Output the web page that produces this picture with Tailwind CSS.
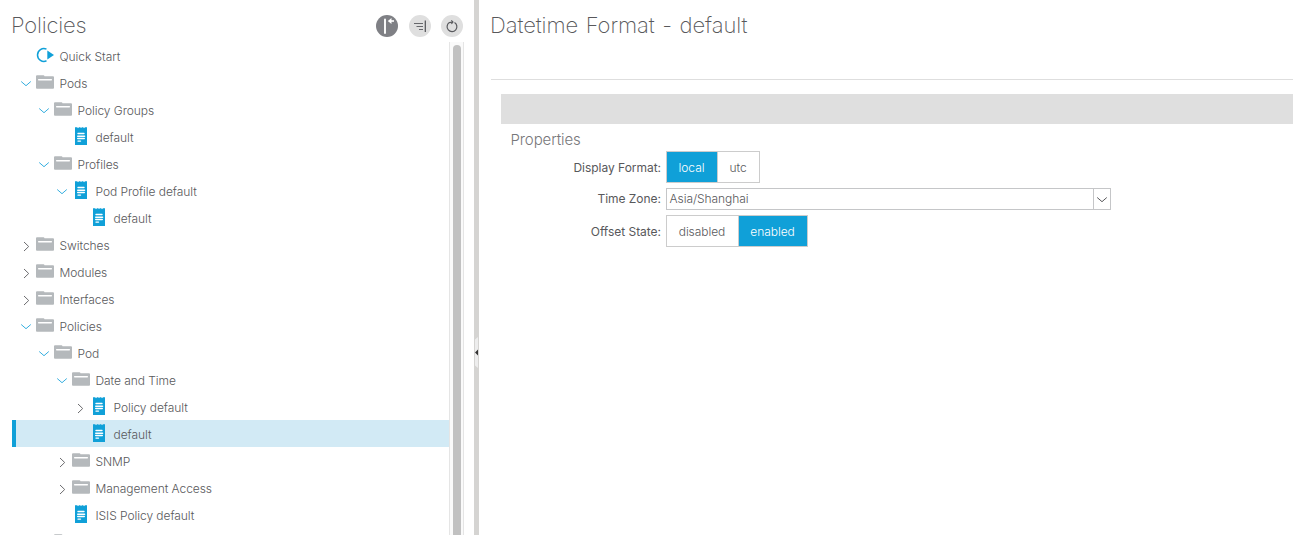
<!DOCTYPE html>
<html lang="en">
<head>
<meta charset="utf-8">
<title>Policies</title>
<script src="https://cdn.jsdelivr.net/npm/@tailwindcss/browser@4"></script>
</head>
<body class="h-[535px] w-[1293px] overflow-hidden bg-white font-['Inter',sans-serif] text-[12px] text-[#58585b]">
<svg class="hidden">
  <symbol id="folder" viewBox="0 0 18 14"><path d="M0 1.2Q0 .2 1 .2H7.500Q8.300 .3 8.500 1.300H17Q18 1.400 18 2.300V13Q18 13.700 17 13.700H1Q0 13.700 0 13Z" fill="#b5b9bc"/><path d="M2.700 4.700H15.300" stroke="#fff" stroke-width="1.500" stroke-linecap="round"/></symbol>
  <symbol id="doc" viewBox="0 0 12 18"><path d="M0 .3H2.200L3 1.300 4 .3H5.200L6 1 7 .3H8.200L9 1.300 10 .3H12V18H0Z" fill="#10a0d8"/><path d="M3 6.500H9M2.700 9.200H9.600M2.700 11.500H9.300M3 14.100H5.500" stroke="#fff" stroke-width="1.400" stroke-linecap="round"/></symbol>
  <symbol id="down" viewBox="0 0 16 16"><path d="M3.200 6.500 8 10.700 12.800 6.500" fill="none" stroke="currentColor" stroke-width="1"/></symbol>
  <symbol id="right" viewBox="0 0 16 16"><path d="M6 4 10.700 8.500 6 13" fill="none" stroke="#6c6c6f" stroke-width="1"/></symbol>
</svg>
<div class="flex h-full">
  <aside class="flex h-full w-[474px] shrink-0 flex-col">
    <header class="flex h-[42px] shrink-0 items-start justify-between pr-[11px] pl-[11px]">
      <h1 class="pt-[9px] text-[22px] leading-[32px] font-extralight tracking-[-0.2px] whitespace-nowrap">Policies</h1>
      <div class="flex gap-[10.500px] pt-[15px]">
        <svg class="size-[22px]" viewBox="0 0 22 22"><circle cx="11" cy="11" r="11" fill="#7f8085"/><path d="M9 4.500V18" stroke="#fff" stroke-width="1.900" stroke-linecap="round"/><path d="M13 6H18" stroke="#fff" stroke-width="1.600"/><path d="M11.800 6 15.500 3V9Z" fill="#fff"/></svg>
        <svg class="size-[22px]" viewBox="0 0 22 22"><circle cx="11" cy="11" r="11" fill="#dfdfdf"/><path d="M5 8.500H14M7.500 11.500H14M10 14.500H14" stroke="#66676b" stroke-width="1"/><path d="M16.300 5.500V17" stroke="#505155" stroke-width="1.200"/></svg>
        <svg class="size-[22px]" viewBox="0 0 22 22"><circle cx="11" cy="11" r="11" fill="#dfdfdf"/><path d="M13.500 7.500A4.900 4.900 0 1 1 8.300 7.600L11.600 7.100" stroke="#58595d" stroke-width="1.200" fill="none"/><path d="M10.300 5.300 12 7.100 10.400 9" stroke="#58595d" stroke-width="1.100" fill="none"/></svg>
      </div>
    </header>
    <div class="flex min-h-0 flex-1">
      <ul class="w-[449px] overflow-hidden leading-[27px] font-light whitespace-nowrap [&_.t]:pl-[5.500px] [&_.t]:pt-[1px] [&_.t]:tracking-[-0.06px]">
        <li class="flex h-[27px] pl-[36px]"><svg class="mt-[5px] h-[16px] w-[18px]" viewBox="0 0 18 16"><path d="M10.500 2.100A6.400 6.400 0 1 0 10.500 13.800" fill="none" stroke="#10a0d8" stroke-width="1.500"/><path d="M11.300 3.600 18 8 11.300 12.400Z" fill="#10a0d8"/></svg><span class="t">Quick Start</span></li>
        <li class="flex h-[27px] pl-[18px]"><svg class="mt-[6px] mr-[2px] size-4 text-[#36afe0]"><use href="#down"/></svg><svg class="mt-[6px] h-[14px] w-[18px]"><use href="#folder"/></svg><span class="t">Pods</span></li>
        <li class="flex h-[27px] pl-[36px]"><svg class="mt-[6px] mr-[2px] size-4 text-[#36afe0]"><use href="#down"/></svg><svg class="mt-[6px] h-[14px] w-[18px]"><use href="#folder"/></svg><span class="t">Policy Groups</span></li>
        <li class="flex h-[27px] pl-[72px]"><svg class="mx-[3px] mt-[4px] h-[18px] w-[12px]"><use href="#doc"/></svg><span class="t">default</span></li>
        <li class="flex h-[27px] pl-[36px]"><svg class="mt-[6px] mr-[2px] size-4 text-[#36afe0]"><use href="#down"/></svg><svg class="mt-[6px] h-[14px] w-[18px]"><use href="#folder"/></svg><span class="t">Profiles</span></li>
        <li class="flex h-[27px] pl-[54px]"><svg class="mt-[6px] mr-[2px] size-4 text-[#36afe0]"><use href="#down"/></svg><svg class="mx-[3px] mt-[4px] h-[18px] w-[12px]"><use href="#doc"/></svg><span class="t">Pod Profile default</span></li>
        <li class="flex h-[27px] pl-[90px]"><svg class="mx-[3px] mt-[4px] h-[18px] w-[12px]"><use href="#doc"/></svg><span class="t">default</span></li>
        <li class="flex h-[27px] pl-[18px]"><svg class="mt-[7px] mr-[2px] size-4"><use href="#right"/></svg><svg class="mt-[6px] h-[14px] w-[18px]"><use href="#folder"/></svg><span class="t">Switches</span></li>
        <li class="flex h-[27px] pl-[18px]"><svg class="mt-[7px] mr-[2px] size-4"><use href="#right"/></svg><svg class="mt-[6px] h-[14px] w-[18px]"><use href="#folder"/></svg><span class="t">Modules</span></li>
        <li class="flex h-[27px] pl-[18px]"><svg class="mt-[7px] mr-[2px] size-4"><use href="#right"/></svg><svg class="mt-[6px] h-[14px] w-[18px]"><use href="#folder"/></svg><span class="t">Interfaces</span></li>
        <li class="flex h-[27px] pl-[18px]"><svg class="mt-[6px] mr-[2px] size-4 text-[#36afe0]"><use href="#down"/></svg><svg class="mt-[6px] h-[14px] w-[18px]"><use href="#folder"/></svg><span class="t">Policies</span></li>
        <li class="flex h-[27px] pl-[36px]"><svg class="mt-[6px] mr-[2px] size-4 text-[#36afe0]"><use href="#down"/></svg><svg class="mt-[6px] h-[14px] w-[18px]"><use href="#folder"/></svg><span class="t">Pod</span></li>
        <li class="flex h-[27px] pl-[54px]"><svg class="mt-[6px] mr-[2px] size-4 text-[#36afe0]"><use href="#down"/></svg><svg class="mt-[6px] h-[14px] w-[18px]"><use href="#folder"/></svg><span class="t">Date and Time</span></li>
        <li class="flex h-[27px] pl-[72px]"><svg class="mt-[7px] mr-[2px] size-4"><use href="#right"/></svg><svg class="mx-[3px] mt-[4px] h-[18px] w-[12px]"><use href="#doc"/></svg><span class="t">Policy default</span></li>
        <li class="ml-[12px] flex h-[27px] border-l-4 border-[#10a0d8] bg-[#d2eaf5] pl-[74px]"><svg class="mx-[3px] mt-[4px] h-[18px] w-[12px]"><use href="#doc"/></svg><span class="t">default</span></li>
        <li class="flex h-[27px] pl-[54px]"><svg class="mt-[7px] mr-[2px] size-4"><use href="#right"/></svg><svg class="mt-[6px] h-[14px] w-[18px]"><use href="#folder"/></svg><span class="t">SNMP</span></li>
        <li class="flex h-[27px] pl-[54px]"><svg class="mt-[7px] mr-[2px] size-4"><use href="#right"/></svg><svg class="mt-[6px] h-[14px] w-[18px]"><use href="#folder"/></svg><span class="t">Management Access</span></li>
        <li class="flex h-[27px] pl-[72px]"><svg class="mx-[3px] mt-[4px] h-[18px] w-[12px]"><use href="#doc"/></svg><span class="t">ISIS Policy default</span></li>
        <li class="flex h-[27px] pl-[54px]"><svg class="mt-[6px] h-[14px] w-[18px]"><use href="#folder"/></svg></li>
      </ul>
      <div class="w-[15px] border-x border-[#e5e5e5] bg-[#fafafa] pt-[3px] pl-[3px]"><div class="h-full w-[8px] rounded-t-full bg-[#c1c1c1]"></div></div>
    </div>
  </aside>
  <div class="flex w-[5px] shrink-0 bg-[#d5d4d2] pt-[337px]">
    <svg class="h-[31px] w-[5px]" viewBox="0 0 5 31"><path d="M4 0 1 2.500V28.500L4 31Z" fill="#ededed"/><path d="M4 12.500V18.500L1 15.500Z" fill="#333"/></svg>
  </div>
  <main class="flex min-w-0 flex-1 flex-col pl-[11px]">
    <h2 class="h-[79px] pt-[9px] text-[22px] leading-[32px] font-extralight tracking-[-0.08px] [word-spacing:1.500px]"><span class="whitespace-nowrap">Datetime Format - default</span></h2>
    <div class="ml-px h-px bg-[#dedede]"></div>
    <div class="mt-[14px] ml-[11px] h-[30px] bg-[#dfdfdf]"></div>
    <h3 class="h-[27px] pt-[5px] pl-[20.500px] text-[15px] leading-[21px] font-light tracking-[-0.1px] text-[#77777a]">Properties</h3>
    <div class="flex h-[32px] items-center">
      <label class="mr-[5px] w-[171px] pt-[2px] text-right whitespace-nowrap tracking-[-0.03px]">Display Format:</label>
      <div class="flex h-[32px] w-[94px] border border-[#ccc] text-center leading-[31px] font-light tracking-[-0.06px]"><span class="w-[50px] bg-[#10a0d8] pr-px text-white">local</span><span class="flex-1 border-l border-[#ccc] pr-px">utc</span></div>
    </div>
    <div class="mt-[5px] flex h-[22px] items-center">
      <label class="mr-[5px] w-[171px] text-right whitespace-nowrap tracking-[-0.03px]">Time Zone:</label>
      <div class="flex h-[22px] w-[445px] border border-[#c5c6c8] pl-[2.500px] leading-[20px] font-light tracking-[-0.06px]"><span class="flex-1">Asia/Shanghai</span><span class="flex w-[17px] items-center border-l border-[#c5c6c8]"><svg class="size-4"><use href="#down"/></svg></span></div>
    </div>
    <div class="mt-[5px] flex h-[32px] items-center">
      <label class="mr-[5px] w-[171px] pt-[2px] text-right whitespace-nowrap tracking-[-0.03px]">Offset State:</label>
      <div class="flex h-[32px] w-[142px] border border-[#ccc] text-center leading-[31px] font-light tracking-[-0.06px]"><span class="flex-1 border-r border-[#ccc] pr-px">disabled</span><span class="w-[68px] bg-[#10a0d8] pr-px text-white">enabled</span></div>
    </div>
  </main>
</div>
</body>
</html>
